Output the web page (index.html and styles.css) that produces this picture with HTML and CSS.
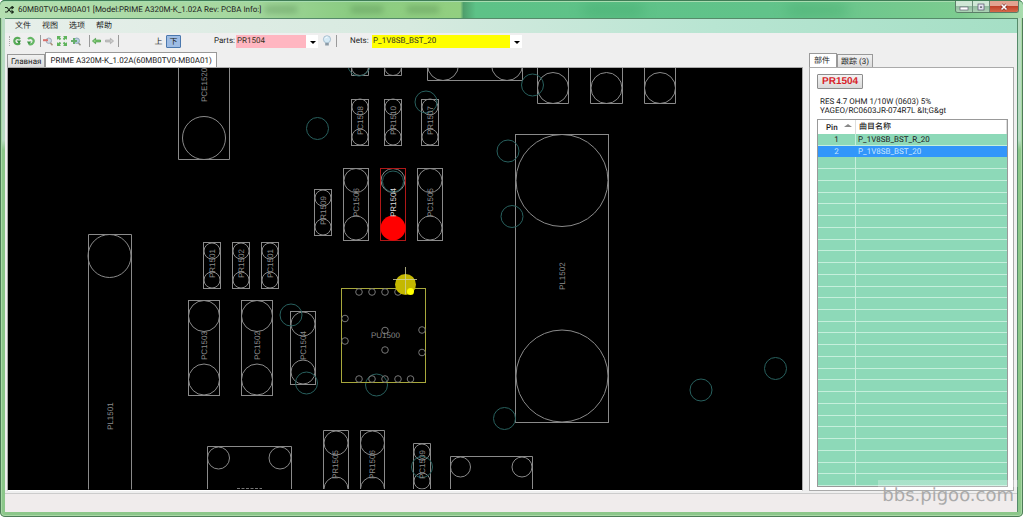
FILE: index.html
```html
<!DOCTYPE html>
<html lang="zh">
<head>
<meta charset="utf-8">
<title>60MB0TV0-MB0A01</title>
<link rel="stylesheet" href="styles.css">
</head>
<body>
<div class="window">
  <header class="titlebar">
    <svg class="app-icon" width="9" height="8" viewBox="0 0 9 8"><path d="M0 1.5h2L6 6h2M0 6h2L6 1.5h2M6.5 0l2 1.5-2 1.5M6.5 4.5l2 1.5-2 1.5" fill="none" stroke="#1d2b1d" stroke-width="1.1"/></svg>
    <h1>60MB0TV0-MB0A01 [Model:PRIME A320M-K_1.02A Rev: PCBA Info:]</h1>
    <div class="glass"><i></i><i></i><i></i><i></i><i></i></div>
    <div class="caption-buttons">
      <button aria-label="Minimize"><svg width="10" height="8" viewBox="0 0 10 8"><rect x="1" y="4" width="8" height="3" fill="#fff" stroke="#667" stroke-width=".7"/></svg></button>
      <button aria-label="Maximize"><svg width="10" height="8" viewBox="0 0 10 8"><rect x="2" y="1" width="6" height="6" fill="#dde" stroke="#556" stroke-width=".7"/><rect x="3.5" y="3" width="3" height="2.2" fill="#667" stroke="#fff" stroke-width=".6"/></svg></button>
      <button class="close" aria-label="Close"><svg width="10" height="8" viewBox="0 0 10 8"><path d="M2.5 1.5l5 5M7.5 1.5l-5 5" stroke="#722" stroke-width="2.8"/><path d="M2.5 1.5l5 5M7.5 1.5l-5 5" stroke="#fff" stroke-width="1.7"/></svg></button>
    </div>
  </header>
  <div class="client">
    <nav class="menu"><button>文件</button><button>视图</button><button>选项</button><button>帮助</button></nav>
    <div class="toolbar">
      <span class="grip"></span>
      <button class="tool" aria-label="Rotate left"><svg width="10" height="10" viewBox="0 0 10 10"><path d="M8 3A3.2 3.2 0 1 0 8 7" fill="none" stroke="#58ac58" stroke-width="2.2"/><path d="M4.6 4.4h4.4l-1.8 3.4z" fill="#358b3b"/></svg></button>
      <button class="tool" aria-label="Rotate right"><svg width="10" height="10" viewBox="0 0 10 10"><path d="M2 3A3.2 3.2 0 1 1 3 8" fill="none" stroke="#65b765" stroke-width="2.2"/><path d="M5.4 5.4H1l1.8 3.4z" fill="#3f9545"/></svg></button>
      <span class="sep"></span>
      <button class="tool" aria-label="Zoom out"><svg width="10" height="10" viewBox="0 0 10 10"><circle cx="5.8" cy="4.7" r="2.7" fill="#d3dce6" stroke="#9faabb"/><path d="M7.5 7l2 2.2" stroke="#a78c76" stroke-width="1.5"/><path d="M0 3.2h5v2H0z" fill="#d9706c"/></svg></button>
      <button class="tool" aria-label="Fit to window"><svg width="10" height="10" viewBox="0 0 10 10"><path d="M0 0h4L2.8 1.2 4.2 2.8 2.8 4.2 1.2 2.8 0 4zM10 0H6l1.2 1.2L5.8 2.8l1.4 1.4 1.6-1.4L10 4zM0 10h4L2.8 8.8l1.4-1.6-1.4-1.4-1.6 1.4L0 6zM10 10H6l1.2-1.2-1.4-1.6 1.4-1.4 1.6 1.4L10 6z" fill="#5fb45c"/></svg></button>
      <button class="tool" aria-label="Zoom in"><svg width="10" height="10" viewBox="0 0 10 10"><circle cx="5.8" cy="4.7" r="2.7" fill="#b9cfe0" stroke="#8ea7bb"/><path d="M7.5 7l2 2.2" stroke="#8f9285" stroke-width="1.5"/><path d="M0 4h2V2h2v2h2v2H4v2H2V6H0z" fill="#67ae6c"/></svg></button>
      <span class="sep spaced"></span>
      <button class="tool" aria-label="Back"><svg width="9" height="8" viewBox="0 0 10 8"><path d="M.5 4L4 1v2h5.500v2H4v2z" fill="#8dd07f" stroke="#3b943b" stroke-width=".8"/></svg></button>
      <button class="tool" aria-label="Forward"><svg width="9" height="8" viewBox="0 0 10 8"><path d="M9.500 4L6 1v2H.5v2H6v2z" fill="#ccc" stroke="#a5a5a5" stroke-width=".8"/></svg></button>
      <span class="sep"></span>
      <div class="layers"><button>上</button><button class="on">下</button></div>
      <label for="parts">Parts:</label>
      <span class="combo parts"><select id="parts"><option>PR1504</option></select><i></i></span>
      <button class="tool" aria-label="Highlight"><svg width="10" height="12" viewBox="0 0 10 12"><circle cx="5" cy="4.300" r="3.600" fill="#d5eaf6" stroke="#9cb6c8" stroke-width=".8"/><path d="M3.200 8h3.600v2.500H3.200z" fill="#8b9aa6"/><path d="M3 3.500Q4 1.800 5.500 2" stroke="#fff" fill="none"/></svg></button>
      <span class="sep"></span>
      <label for="nets">Nets:</label>
      <span class="combo nets"><select id="nets"><option>P_1V8SB_BST_20</option></select><i></i></span>
    </div>
    <main>
      <section class="board-pane">
        <div class="tabs"><button>Главная</button><button class="active">PRIME A320M-K_1.02A(60MB0TV0-MB0A01)</button></div>
        <div class="board">
          <svg width="100%" height="100%" role="img" aria-label="Board view">
            <g class="plan" transform="translate(-8 -68)">
              <g class="part">
                <path d="M178.500 60V159.500H229.500V60"/><circle cx="204" cy="138" r="21.500"/>
                <path d="M351.500 60V75.500H368.500V60M384.500 60V75.500H401.500V60"/><circle cx="360" cy="67" r="8.500"/><circle cx="393" cy="67" r="8.500"/>
                <path d="M427.500 60V80.500H522.500V60"/><circle cx="443" cy="65" r="15.500"/><circle cx="507" cy="65" r="15.500"/>
                <path d="M537.500 60V103.500H568.500V60M590.500 60V103.500H622.500V60M644.500 60V103.500H675.500V60"/><circle cx="553" cy="88" r="15.500"/><circle cx="606.500" cy="88" r="15.500"/><circle cx="660" cy="88" r="15.500"/>
                <rect x="351.500" y="99.500" width="17" height="46"/><circle cx="360" cy="107" r="8"/><circle cx="360" cy="137" r="8"/>
                <rect x="384.500" y="99.500" width="17" height="46"/><circle cx="393" cy="107" r="8"/><circle cx="393" cy="137" r="8"/>
                <rect x="421.500" y="99.500" width="17" height="46"/><circle cx="430" cy="107" r="8"/><circle cx="430" cy="137" r="8"/>
                <rect x="343.500" y="168.500" width="25" height="72"/><circle cx="356" cy="180.500" r="12"/><circle cx="356" cy="228" r="12"/>
                <rect x="417.500" y="168.500" width="25" height="72"/><circle cx="430" cy="180.500" r="12"/><circle cx="430" cy="228" r="12"/>
                <circle cx="393" cy="180.500" r="12"/>
                <rect x="314.500" y="189.500" width="17" height="46"/><circle cx="323" cy="198" r="8"/><circle cx="323" cy="227" r="8"/>
                <rect x="515.500" y="134.500" width="93" height="288"/><circle cx="562" cy="180.500" r="46"/><circle cx="562" cy="376" r="46"/>
                <path d="M88.500 500V234.500H131.500V500"/><circle cx="109.500" cy="256" r="21.500"/>
                <rect x="203.500" y="242.500" width="17" height="46"/><circle cx="212" cy="251" r="8"/><circle cx="212" cy="280" r="8"/>
                <rect x="232.500" y="242.500" width="17" height="46"/><circle cx="241" cy="251" r="8"/><circle cx="241" cy="280" r="8"/>
                <rect x="261.500" y="242.500" width="17" height="46"/><circle cx="270" cy="251" r="8"/><circle cx="270" cy="280" r="8"/>
                <rect x="188.500" y="300.500" width="31" height="95"/><circle cx="204" cy="316" r="15.500"/><circle cx="204" cy="379.500" r="15.500"/>
                <rect x="241.500" y="300.500" width="31" height="95"/><circle cx="257" cy="316" r="15.500"/><circle cx="257" cy="379.500" r="15.500"/>
                <rect x="290.500" y="311.500" width="25" height="73"/><circle cx="303" cy="324" r="12"/><circle cx="303" cy="372" r="12"/>
                <path d="M207.500 489V446.500H291.500V489"/><circle cx="218.500" cy="458" r="11"/><circle cx="280" cy="458" r="11"/>
                <path d="M323.500 489V430.500H348.500V489M360.500 489V430.500H384.500V489"/><circle cx="336" cy="443" r="12"/><circle cx="372.500" cy="443" r="12"/><path d="M324 489a12 12 0 0 1 24 0M360.500 489a12 12 0 0 1 24 0"/>
                <path d="M413.500 489V443.500H430.500V489"/><circle cx="422" cy="452" r="8"/><circle cx="422" cy="481" r="8"/>
                <path d="M450.500 489V456.500H532.500V489"/><circle cx="460.500" cy="467" r="10"/><circle cx="522" cy="467" r="10"/>
              </g>
              <g class="via">
                <circle cx="317.500" cy="128.500" r="11"/><circle cx="426" cy="102" r="11"/><circle cx="359" cy="65" r="11"/><circle cx="532.500" cy="85" r="11"/><circle cx="508" cy="151" r="11"/><circle cx="512" cy="216.500" r="11"/><circle cx="393" cy="181.500" r="10.500"/><circle cx="291" cy="315" r="11"/><circle cx="306.500" cy="383" r="11"/><circle cx="376.500" cy="385" r="11"/><circle cx="504.500" cy="418.500" r="11"/><circle cx="422" cy="467" r="10.500"/><circle cx="701" cy="390" r="11"/><circle cx="775.500" cy="368.500" r="11"/>
              </g>
              <rect class="selected" x="380.500" y="168.500" width="25" height="72"/><circle cx="393" cy="228" r="12.500" fill="#f00"/>
              <rect class="linked" x="341.500" y="288.500" width="84" height="94"/>
              <g class="pin">
                <circle cx="359" cy="292" r="3.300"/><circle cx="372" cy="292" r="3.300"/><circle cx="385" cy="292" r="3.300"/><circle cx="398" cy="292" r="3.300"/>
                <circle cx="359" cy="379" r="3.300"/><circle cx="372" cy="379" r="3.300"/><circle cx="385" cy="379" r="3.300"/><circle cx="398" cy="379" r="3.300"/><circle cx="410.500" cy="379" r="3.300"/>
                <circle cx="345" cy="318.500" r="3.300"/><circle cx="345" cy="341" r="3.300"/><circle cx="422" cy="330" r="3.300"/><circle cx="422" cy="352.500" r="3.300"/><circle cx="385" cy="330.500" r="3.300"/><circle cx="385" cy="350" r="3.300"/>
              </g>
              <circle cx="405.500" cy="284.500" r="10.500" fill="#c4b800"/><circle cx="410.500" cy="291.500" r="3.500" fill="#ff0"/>
              <path d="M405.500 267V294M393 279.500H417" stroke="#cfcf9a" opacity=".8"/>
              <g class="name">
                <text transform="translate(207 102) rotate(-90)">PCE1520</text>
                <text transform="translate(363 135) rotate(-90)">PC1508</text>
                <text transform="translate(396 135) rotate(-90)">PR1510</text>
                <text transform="translate(433 135) rotate(-90)">PR1507</text>
                <text transform="translate(359 217) rotate(-90)">PC1506</text>
                <text class="hot" transform="translate(396 217) rotate(-90)">PR1504</text>
                <text transform="translate(433 217) rotate(-90)">PC1505</text>
                <text transform="translate(326 225) rotate(-90)">PR1509</text>
                <text transform="translate(215 278) rotate(-90)">PR1501</text>
                <text transform="translate(244 278) rotate(-90)">PR1502</text>
                <text transform="translate(273 278) rotate(-90)">PC1501</text>
                <text transform="translate(207 360) rotate(-90)">PC1503</text>
                <text transform="translate(260 360) rotate(-90)">PC1502</text>
                <text transform="translate(306 360) rotate(-90)">PC1504</text>
                <text transform="translate(113 430) rotate(-90)">PL1501</text>
                <text transform="translate(565 290) rotate(-90)">PL1502</text>
                <text transform="translate(338 479) rotate(-90)">PR1505</text>
                <text transform="translate(375 479) rotate(-90)">PR1506</text>
                <text transform="translate(425 479) rotate(-90)">PC1509</text>
                <text x="371" y="338">PU1500</text>
              </g>
              <path d="M237 488.500H262" stroke="#777" stroke-dasharray="3 1.500"/>
              <path d="M0 489.500H2000V1200H0z" fill="#000"/>
            </g>
          </svg>
        </div>
      </section>
      <aside>
        <div class="tabs"><button class="active">部件</button><button>跟踪 (3)</button></div>
        <div class="details">
          <button class="part-button">PR1504</button>
          <p>RES 4.7 OHM 1/10W (0603) 5%<br>YAGEO/RC0603JR-074R7L &amp;lt;G&amp;gt</p>
          <table>
            <thead><tr><th>Pin<i></i></th><th>曲目名称</th></tr></thead>
            <tbody>
              <tr><td>1</td><td>P_1V8SB_BST_R_20</td></tr>
              <tr class="current"><td>2</td><td>P_1V8SB_BST_20</td></tr>
              <tr><td></td><td></td></tr><tr><td></td><td></td></tr><tr><td></td><td></td></tr><tr><td></td><td></td></tr>
              <tr><td></td><td></td></tr><tr><td></td><td></td></tr><tr><td></td><td></td></tr><tr><td></td><td></td></tr>
              <tr><td></td><td></td></tr><tr><td></td><td></td></tr><tr><td></td><td></td></tr><tr><td></td><td></td></tr>
              <tr><td></td><td></td></tr><tr><td></td><td></td></tr><tr><td></td><td></td></tr><tr><td></td><td></td></tr>
              <tr><td></td><td></td></tr><tr><td></td><td></td></tr><tr><td></td><td></td></tr><tr><td></td><td></td></tr>
              <tr><td></td><td></td></tr><tr><td></td><td></td></tr><tr><td></td><td></td></tr><tr><td></td><td></td></tr>
              <tr><td></td><td></td></tr><tr><td></td><td></td></tr><tr><td></td><td></td></tr><tr><td></td><td></td></tr>
            </tbody>
          </table>
        </div>
      </aside>
    </main>
    <footer class="status"></footer>
  </div>
  <div class="watermark">bbs.pigoo.com</div>
</div>
</body>
</html>
```

FILE: styles.css
```css
* { box-sizing: border-box; }
body { margin: 0; font: 8px/10px Roboto, "Noto Sans CJK SC", sans-serif; color: #222; text-rendering: geometricPrecision; }
button, select { font: inherit; color: inherit; margin: 0; padding: 0; border: 0; background: none; text-rendering: inherit; }
h1, p { margin: 0; font: inherit; }
svg { display: block; }

.window {
  position: relative;
  display: flex;
  flex-direction: column;
  height: 100vh;
  padding: 0 5px 5px;
  border-radius: 5px;
  background: linear-gradient(#b9dcc3 0 140px, #8cc78a 150px);
  box-shadow: inset 0 0 0 1px #4d7c57, inset 0 0 0 2px #a9d8a6;
}
.titlebar {
  display: flex;
  align-items: center;
  height: 18px;
  flex: none;
  margin: 0 -5px;
  padding-left: 5px;
  border-radius: 5px 5px 0 0;
  border-top: 1px solid #3f7d56;
  box-shadow: inset 0 1px #a8dcb0;
  background: linear-gradient(90deg, #b4dfb0 0, #a4d79e 24%, #8bcc82 34%, #92cf80 45%, #4f9f6c 45.300%, #5dc287 46.500%, #61c38a 75%, #7dcc90 94%, #a9dcae);
}
.titlebar h1 { margin-left: 4px; line-height: 12px; white-space: nowrap; }
.glass { flex: 1; display: flex; gap: 24px; height: 16px; overflow: hidden; align-items: center; padding-left: 4px; }
.glass i { width: 32px; height: 7px; background: #467a44; opacity: .35; filter: blur(3px); }
.glass i:nth-child(2) { margin-left: 30px; }
.glass i:nth-child(n+4) { margin-left: 120px; width: 60px; height: 14px; background: #339f60; filter: blur(7px); }
.caption-buttons { display: flex; align-self: flex-start; margin-right: 4px; border: 1px solid #5b7e68; border-top: 0; border-radius: 0 0 3px 3px; overflow: hidden; }
.caption-buttons button { display: grid; place-items: center; width: 17px; height: 11px; border-right: 1px solid #6b8d78; background: linear-gradient(#cfe7d5 45%, #93bca0 50%, #acd2b5); }
.caption-buttons .close { width: 28px; border: 0; background: linear-gradient(#e3a391 45%, #c1422a 50%, #d5694b); }

.client { flex: 1; min-height: 0; display: flex; flex-direction: column; border: solid #568a6a; border-width: 1px 1px 0 0; background: #efefef; }
.menu { display: flex; gap: 12px; height: 14px; padding-left: 10px; background: linear-gradient(90deg, #e7efea, #d7eae0 40%, #b8e5d2 70%, #a5dfc5); }
.menu button { line-height: 14px; width: 15px; white-space: nowrap; }
.toolbar { display: flex; align-items: center; height: 16px; padding-left: 4px; }
.grip { height: 10px; border-left: 1px dotted #aaa; margin-right: 2px; }
.tool { margin-right: 4px; }
.sep { width: 1px; height: 12px; background: #9a9a9a; margin-right: 2px; }
.sep.spaced { margin-left: 4px; }
.layers { display: flex; align-items: center; margin: 0 33px 0 30px; }
.layers button { width: 15px; height: 13px; line-height: 11px; color: #222; }
.layers .on { border: 1px solid #4b78ae; background: #9ebce4; border-radius: 1px; }
.toolbar label { width: 22px; white-space: nowrap; }
.combo { position: relative; height: 13px; margin-right: 4px; background: #fff; }
.combo select { display: block; appearance: none; width: 100%; height: 12px; padding-left: 1px; line-height: 11px; color: #332; outline: 0; }
.combo i { position: absolute; right: 2px; top: 6px; border: 3px solid transparent; border-top-color: #000; border-bottom: 0; pointer-events: none; }
.parts { width: 82px; background: linear-gradient(90deg, #ffb6c1 70px, #fff 70px); }
.nets { width: 150px; background: linear-gradient(90deg, #ff0 138px, #fff 138px); }
.toolbar .sep + label { margin-left: 11px; }

main { flex: 1; min-height: 0; display: flex; gap: 6px; padding: 3px 3px 0 2px; }
.board-pane { flex: 1; min-width: 0; display: flex; flex-direction: column; }
.tabs { display: flex; align-items: flex-end; height: 15px; flex: none; }
.tabs button { height: 13px; padding: 0 3px; line-height: 11px; white-space: nowrap; border: 1px solid #999; border-bottom: 0; background: linear-gradient(#f1f1f1, #dcdcdc); }
.tabs .active { height: 15px; padding: 0 4px; line-height: 13px; background: #fff; }
.board { flex: 1; min-height: 0; border: 1px solid #aaa; border-bottom-color: #fff; background: #000; overflow: hidden; }
.plan { fill: none; stroke-width: 1; }
.part { stroke: #8a8a8a; }
.via { stroke: #28605e; }
.selected { stroke: #b01818; }
.linked { stroke: #a8a83c; }
.pin { stroke: #777; }
.name { font: 8px "Liberation Sans", sans-serif; fill: #8c8c8c; stroke: none; }
.name .hot { fill: #ddd; }

aside { width: 205px; flex: none; display: flex; flex-direction: column; margin-top: 1px; }
aside .tabs { height: 14px; }
aside .tabs .active { width: 28px; height: 14px; text-align: left; }
.details { flex: 1; min-height: 0; display: flex; flex-direction: column; align-items: flex-start; padding: 6px 5px 3px 7px; border: 1px solid #aaa; background: #fff; }
.part-button { height: 15px; padding: 0 4px; font-family: "Liberation Sans", sans-serif; font-size: 10px; font-weight: bold; line-height: 13px; color: #d81f2a; border: 1px solid #8d8d8d; border-radius: 1px; background: linear-gradient(#f3f3f3, #d9d9d9); }
.details p { margin: 8px 0 4px 3px; line-height: 9px; white-space: nowrap; }
table { flex: 1; width: 100%; min-height: 0; display: flex; flex-direction: column; border: 1px solid #999; background: #8dd9b8; overflow: hidden; }
thead { flex: none; display: block; }
tbody { flex: 1; min-height: 0; display: flex; flex-direction: column; }
tr { display: grid; grid-template-columns: 38px 1fr; }
tbody tr { flex: 1; min-height: 0; border-bottom: 1px solid #c5efdc; }
th { padding: 0 3px; height: 14px; line-height: 13px; font-weight: 500; text-align: left; background: #fff; border-right: 1px solid #ddd; }
th:first-child { display: flex; justify-content: space-between; align-items: center; padding-left: 8px; }
th i { border: 4px solid transparent; border-bottom: 3px solid #888; border-top: 0; margin-bottom: 3px; }
td { padding: 0 2px; line-height: 11px; }
td:first-child { text-align: center; border-right: 1px solid #c5efdc; }
tbody .current { background: #3296fa; color: #c9e6ff; border-color: #3296fa; }
.current td:first-child { border-color: #3296fa; }
.status { height: 19px; flex: none; margin-top: 2px; background: #f0ecec; border-top: 1px solid #ccc; }
.watermark { position: absolute; right: 5px; bottom: 7px; padding: 4px 4px 2px; font: 18px/24px "DejaVu Sans", sans-serif; color: #aaa; background: linear-gradient(rgba(255,255,255,.25) 7px, transparent 7px); }
```
